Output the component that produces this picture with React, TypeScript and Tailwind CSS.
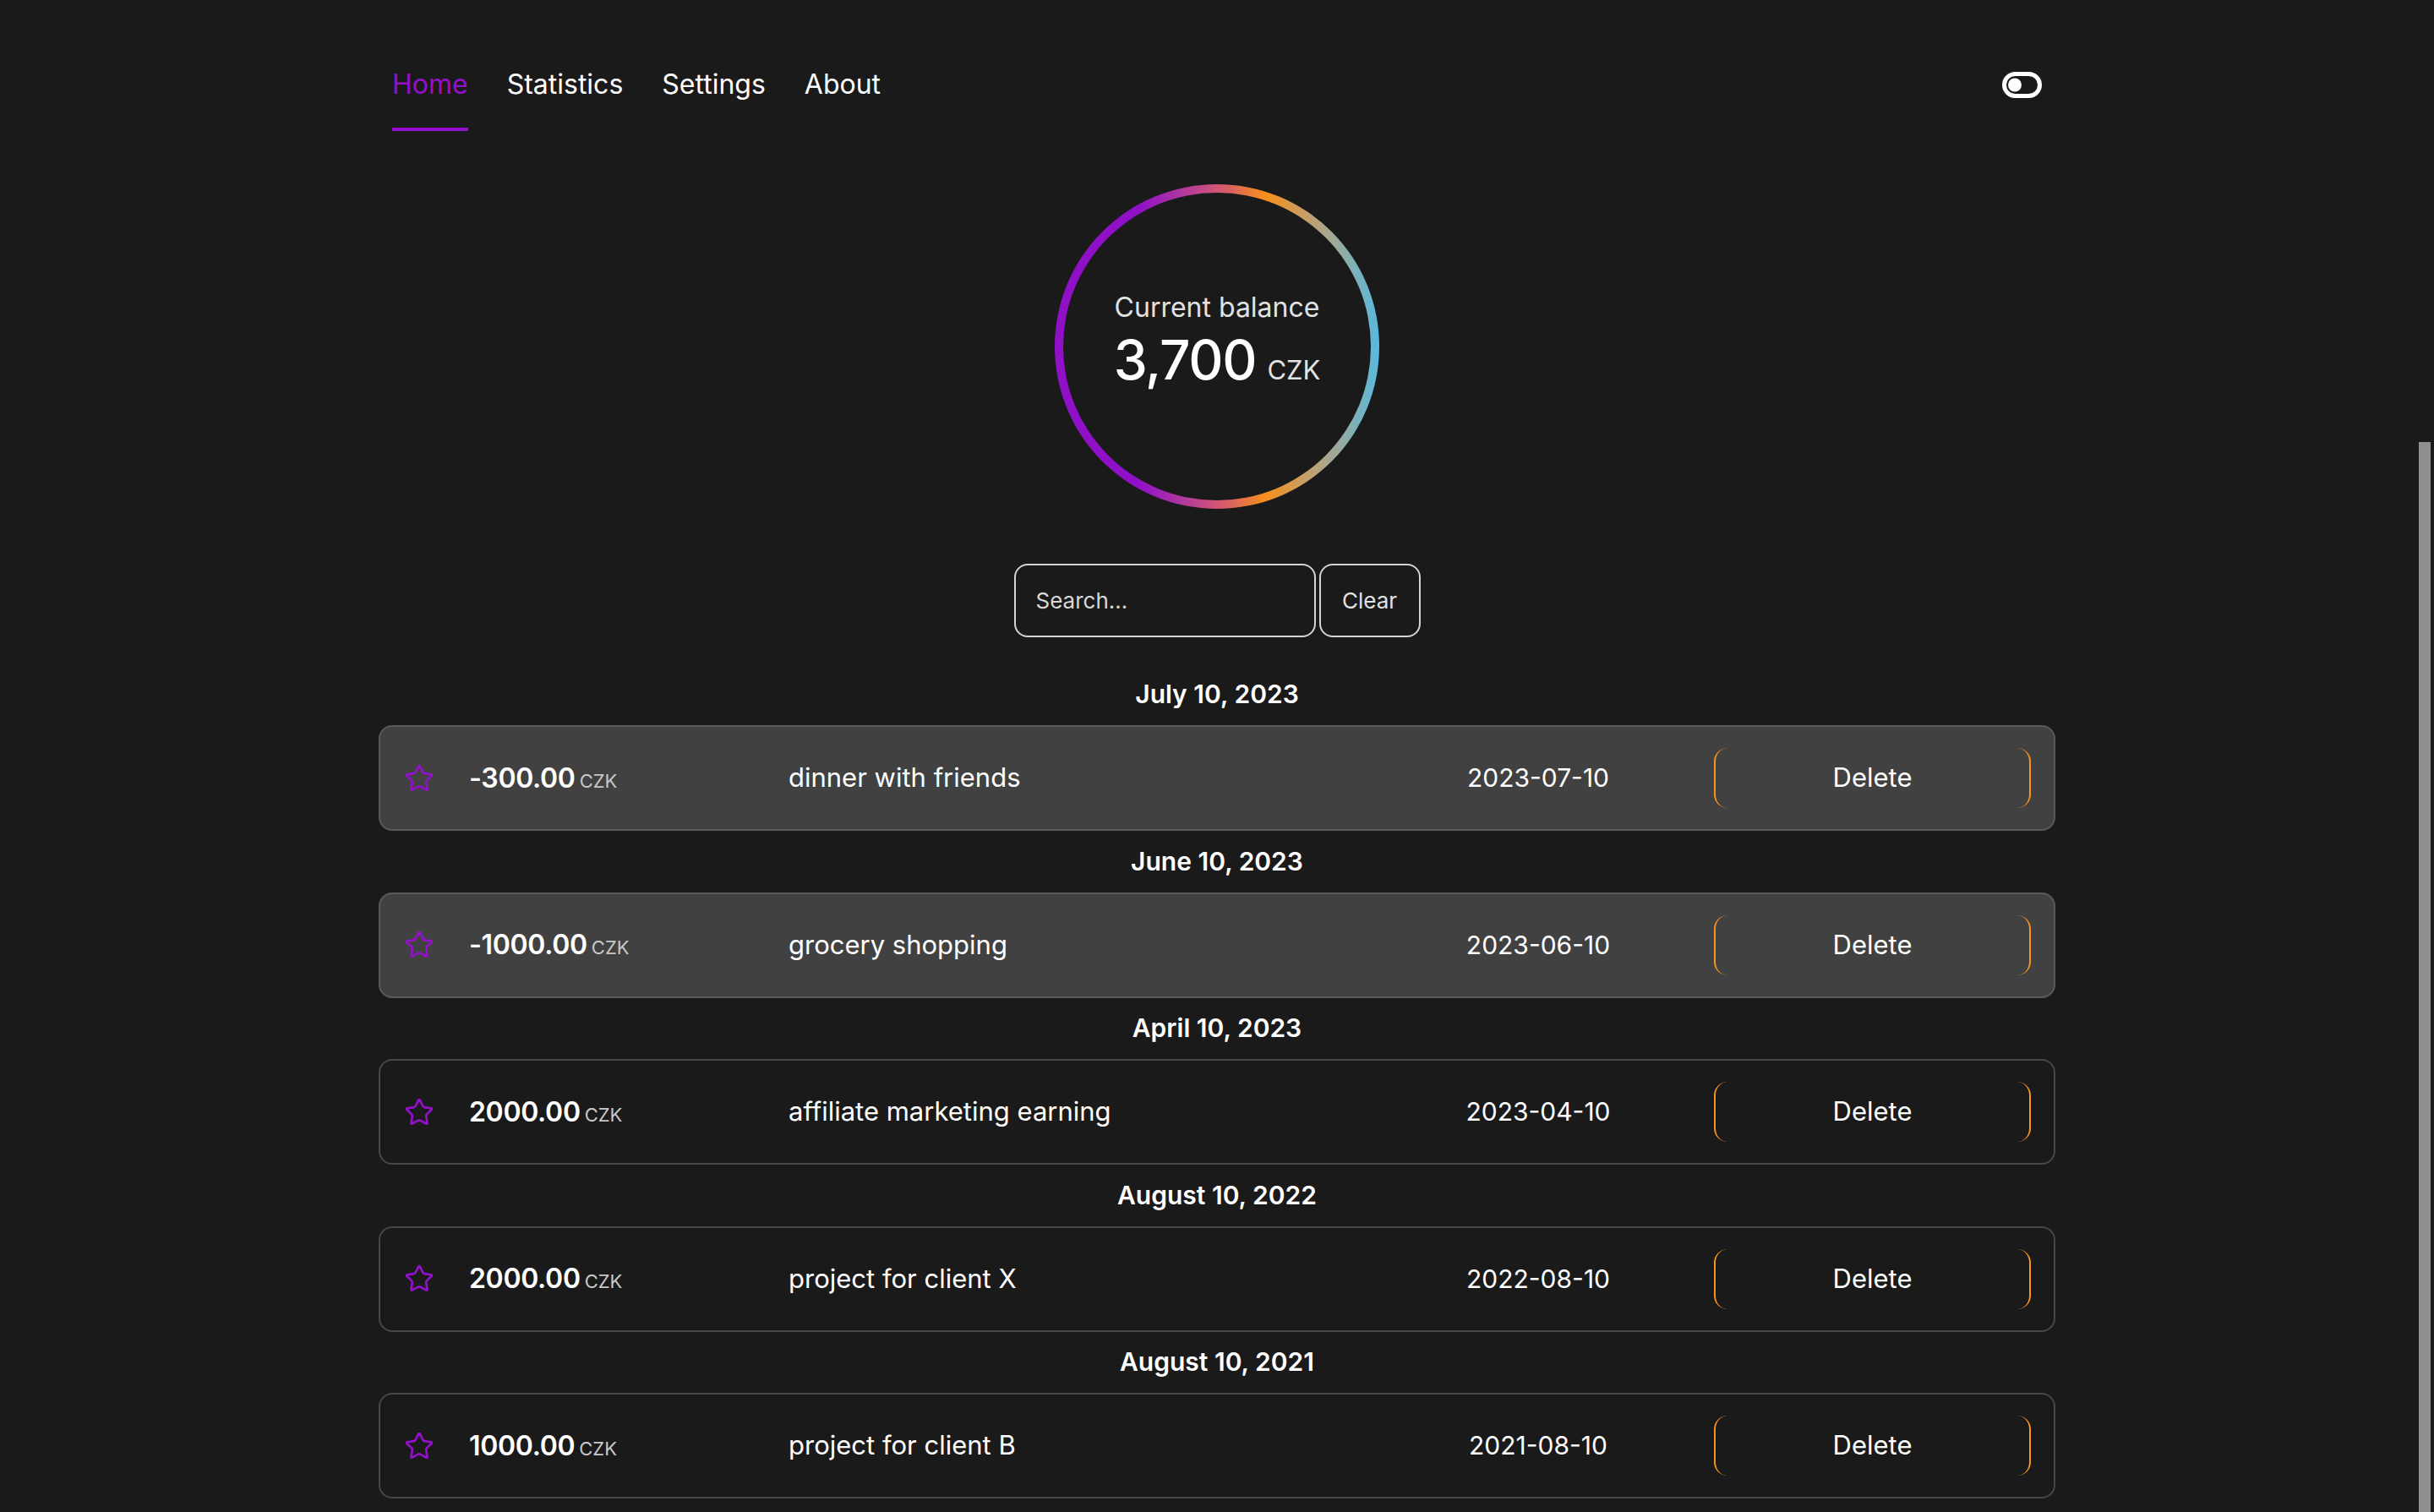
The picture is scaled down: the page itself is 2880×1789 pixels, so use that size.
import React from 'react';
import { Star } from 'lucide-react';

// ── data ─────────────────────────────────────────

interface Txn {
  heading: string;
  amount: string;
  note: string;
  date: string;
  negative: boolean;
}

const TXNS: Txn[] = [
  { heading: 'July 10, 2023',   amount: '-300.00',  note: 'dinner with friends',         date: '2023-07-10', negative: true  },
  { heading: 'June 10, 2023',   amount: '-1000.00', note: 'grocery shopping',            date: '2023-06-10', negative: true  },
  { heading: 'April 10, 2023',  amount: '2000.00',  note: 'affiliate marketing earning', date: '2023-04-10', negative: false },
  { heading: 'August 10, 2022', amount: '2000.00',  note: 'project for client X',        date: '2022-08-10', negative: false },
  { heading: 'August 10, 2021', amount: '1000.00',  note: 'project for client B',        date: '2021-08-10', negative: false },
];

const NAV = ['Home', 'Statistics', 'Settings', 'About'];

// ── pieces ───────────────────────────────────────

const ToggleIcon = () => (
  <svg width="47" height="31" viewBox="0 0 47 31" fill="none">
    <rect x="2.5" y="2.5" width="42" height="26" rx="13" stroke="white" strokeWidth="5" />
    <circle cx="15" cy="15.5" r="8" fill="white" />
  </svg>
);

const Row = ({ t }: { t: Txn }) => (
  <div
    className={
      t.negative
        ? 'flex items-center h-[125px] rounded-2xl border-2 border-[#5a5a5a] bg-[#414141] pl-[28px] pr-[27px]'
        : 'flex items-center h-[125px] rounded-2xl border-2 border-[#474747] bg-[#1a1a1a] pl-[28px] pr-[27px]'
    }
  >
    <Star size={36} strokeWidth={1.8} className="text-[#9410cc] shrink-0" />
    <div className="ml-[41px] w-[378px] flex items-baseline gap-[5px]">
      <span className="text-[32px] font-semibold text-white tracking-[-0.01em]">{t.amount}</span>
      <span className="text-[22px] text-[#c8c8c8]">CZK</span>
    </div>
    <div className="flex-1 text-[31px] text-white">{t.note}</div>
    <div className="w-[416px] text-center text-[30px] text-white">{t.date}</div>
    <button className="w-[375px] h-[71px] rounded-2xl border-x-2 border-[#f7931e] text-[31px] text-white">
      Delete
    </button>
  </div>
);

// ── page ─────────────────────────────────────────

export default function App() {
  return (
    <div className="h-screen overflow-hidden bg-[#1a1a1a] text-white font-['Inter','Noto_Sans',sans-serif]">
      <div className="max-w-[1984px] mx-auto">

        {/* nav */}
        <header className="flex justify-between items-start px-[16px]">
          <nav className="flex gap-[46px] pt-[81px]">
            {NAV.map((n, i) => (
              <a
                key={n}
                className={
                  i === 0
                    ? 'text-[32px] leading-[38px] pb-[32px] border-b-4 border-[#9410cc] text-[#9410cc]'
                    : 'text-[32px] leading-[38px] pb-[32px] border-b-4 border-transparent text-white'
                }
              >
                {n}
              </a>
            ))}
          </nav>
          <div className="mt-[85px]">
            <ToggleIcon />
          </div>
        </header>

        {/* balance ring */}
        <div className="flex justify-center mt-[63px]">
          <div className="w-[384px] h-[384px] rounded-full p-[10px] bg-[linear-gradient(90deg,#9010c8_0%,#9010c8_26%,#b23a9c_40%,#d55a6c_52%,#f7901a_65%,#b3a483_82%,#58b9de_100%)]">
            <div className="w-full h-full rounded-full bg-[#1a1a1a] flex flex-col items-center justify-center pb-[14px]">
              <span className="text-[32px] leading-[40px] text-[#e2e2e2]">Current balance</span>
              <div className="flex items-baseline gap-[13px] mt-[6px]">
                <span className="text-[64px] leading-[72px] font-medium text-white tracking-[-0.02em]">3,700</span>
                <span className="text-[31px] text-[#e2e2e2]">CZK</span>
              </div>
            </div>
          </div>
        </div>

        {/* search */}
        <div className="flex justify-center gap-[4px] mt-[65px]">
          <input
            placeholder="Search..."
            className="w-[357px] h-[87px] rounded-[16px] border-2 border-[#d4d4d4] bg-transparent pl-[24px] text-[26px] text-white placeholder:text-[#d8d8d8] outline-none"
          />
          <button className="w-[120px] h-[87px] rounded-[16px] border-2 border-[#d4d4d4] text-[26px] text-[#e2e2e2]">
            Clear
          </button>
        </div>

        {/* transactions */}
        <div className="mt-[31.5px]">
          {TXNS.map((t) => (
            <div key={t.heading}>
              <div className="h-[72.5px] flex items-center justify-center text-[30px] font-semibold text-white">
                {t.heading}
              </div>
              <Row t={t} />
            </div>
          ))}
        </div>
      </div>

      {/* scrollbar thumb */}
      <div className="fixed right-[4px] top-[523px] bottom-0 w-[14px] bg-[#8f8f8f]" />
    </div>
  );
}
